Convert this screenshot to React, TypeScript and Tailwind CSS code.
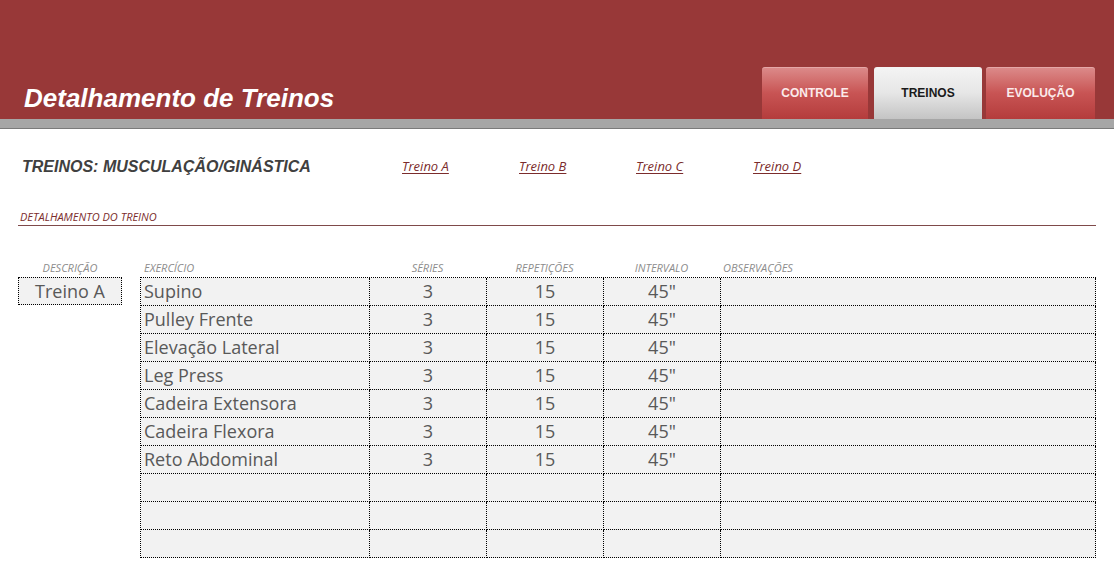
import React from 'react'

const tabs = [
  { name: 'CONTROLE', active: false, w: 'w-[106px]' },
  { name: 'TREINOS', active: true, w: 'w-[108px]' },
  { name: 'EVOLUÇÃO', active: false, w: 'w-[109px]' },
]

const links = ['Treino A', 'Treino B', 'Treino C', 'Treino D']

const rows = [
  ['Supino', '3', '15', '45"'],
  ['Pulley Frente', '3', '15', '45"'],
  ['Elevação Lateral', '3', '15', '45"'],
  ['Leg Press', '3', '15', '45"'],
  ['Cadeira Extensora', '3', '15', '45"'],
  ['Cadeira Flexora', '3', '15', '45"'],
  ['Reto Abdominal', '3', '15', '45"'],
  ['', '', '', ''],
  ['', '', '', ''],
  ['', '', '', ''],
]

const cell = 'h-[28px] border-r border-b border-dotted border-black bg-[#f2f2f2] flex items-center'

export default function App() {
  return (
    <div className="w-[1114px] h-[586px] bg-white overflow-hidden font-['Open_Sans',sans-serif]">
      {/* Header */}
      <div className="h-[119px] bg-[#983838] flex items-end justify-between">
        <h1 className="pl-[24px] pb-[5px] text-[26px] leading-[32px] font-bold italic text-white font-['Liberation_Sans',Arial,sans-serif]">
          Detalhamento de Treinos
        </h1>
        <div className="flex items-end mr-[19px]">
          {tabs.map((t, i) => (
            <div
              key={t.name}
              className={`${t.w} h-[52px] rounded-t-[3px] flex items-center justify-center text-[12px] font-bold font-['Liberation_Sans',Arial,sans-serif] ${
                i === 1 ? 'ml-[6px] mr-[4px]' : ''
              } ${
                t.active
                  ? 'bg-gradient-to-b from-[#f4f4f4] via-[#e6e6e6] to-[#c4c4c4] text-[#1a1a1a]'
                  : 'bg-gradient-to-b from-[#dc8b8b] via-[#c85454] to-[#b43c3c] text-[#fbeaea] shadow-[inset_0_1px_0_rgba(255,255,255,0.25)]'
              }`}
            >
              {t.name}
            </div>
          ))}
        </div>
      </div>
      <div className="h-[10px] bg-[#a6a6a6] border-b border-[#7a7a7a]" />

      {/* Title row */}
      <div className="flex items-center mt-[28px] h-[20px]">
        <div className="w-[402px] pl-[22px] text-[16px] font-bold italic text-[#404040] font-['Liberation_Sans',Arial,sans-serif]">
          TREINOS: MUSCULAÇÃO/GINÁSTICA
        </div>
        {links.map((l) => (
          <div key={l} className="w-[117px] text-[13px] italic text-[#7b2c2c] underline underline-offset-2">
            {l}
          </div>
        ))}
      </div>

      {/* Section label */}
      <div className="mt-[32px] mx-[18px] border-b border-[#7f4a4a] pl-[2px] pb-[1px] text-[11px] leading-[15px] italic text-[#7b2c2c]">
        DETALHAMENTO DO TREINO
      </div>

      {/* Table */}
      <div className="flex mt-[33px]">
        <div className="ml-[18px] w-[104px]">
          <div className="h-[18px] text-center text-[11px] leading-[18px] italic text-[#8c8c8c]">DESCRIÇÃO</div>
          <div className="h-[28px] border border-dotted border-black bg-[#f2f2f2] flex items-center justify-center text-[18px] text-[#595959]">
            Treino A
          </div>
        </div>
        <div className="ml-[18px]">
          <div className="grid grid-cols-[229px_117px_117px_117px_375px] h-[18px] text-[11px] leading-[18px] italic text-[#8c8c8c]">
            <div className="pl-[4px]">EXERCÍCIO</div>
            <div className="text-center">SÉRIES</div>
            <div className="text-center">REPETIÇÕES</div>
            <div className="text-center">INTERVALO</div>
            <div className="pl-[3px]">OBSERVAÇÕES</div>
          </div>
          <div className="grid grid-cols-[229px_117px_117px_117px_375px] border-t border-l border-dotted border-black text-[18px] text-[#595959]">
            {rows.map((r, i) => (
              <React.Fragment key={i}>
                <div className={`${cell} pl-[3px]`}>{r[0]}</div>
                <div className={`${cell} justify-center`}>{r[1]}</div>
                <div className={`${cell} justify-center`}>{r[2]}</div>
                <div className={`${cell} justify-center`}>{r[3]}</div>
                <div className={cell} />
              </React.Fragment>
            ))}
          </div>
        </div>
      </div>
    </div>
  )
}
